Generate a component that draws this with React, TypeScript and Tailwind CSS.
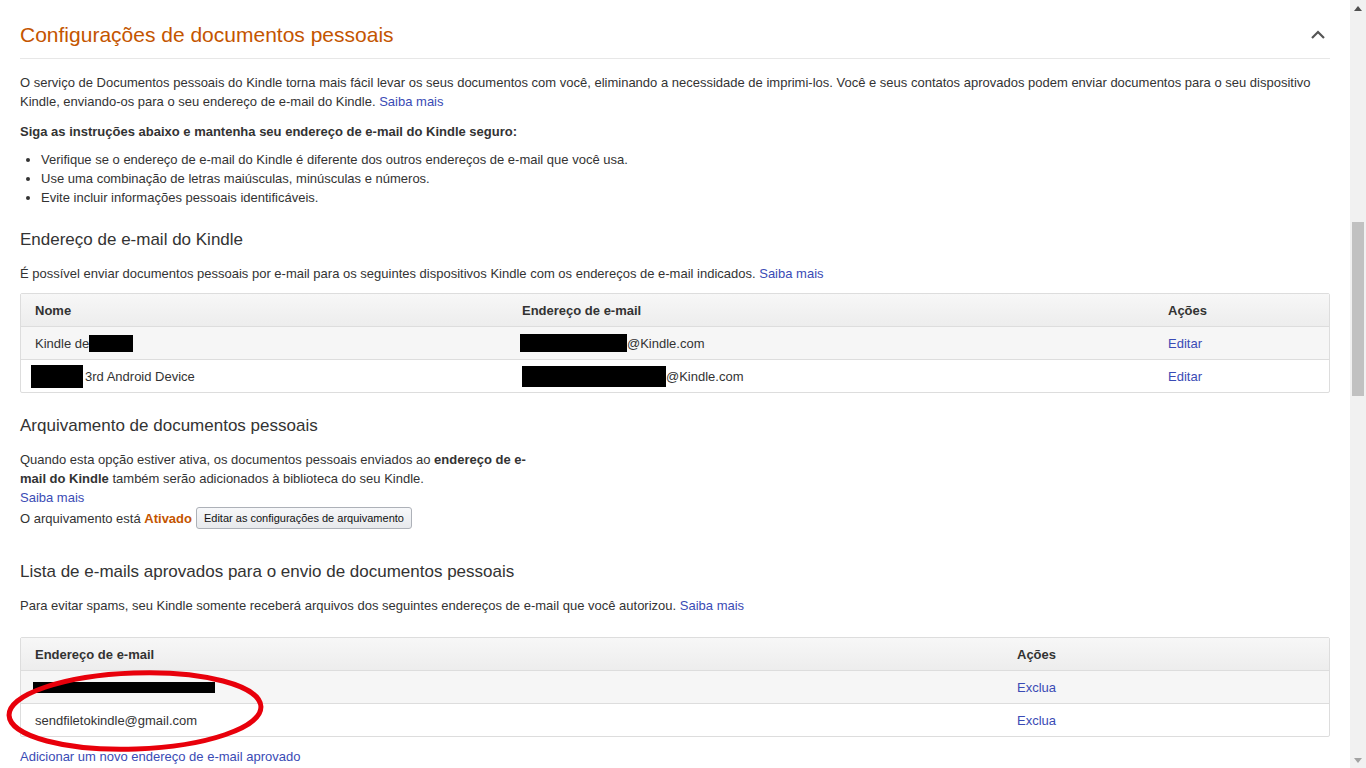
import React from "react";

const font = { fontFamily: '"Liberation Sans", Arial, sans-serif' };

function Link({ children }: { children: React.ReactNode }) {
  return <a className="text-[#3a4bb5] cursor-pointer">{children}</a>;
}

function Redacted({ w, h = 17, className = "" }: { w: number; h?: number; className?: string }) {
  return (
    <span
      className={`inline-block bg-black align-middle ${className}`}
      style={{ width: w, height: h }}
    />
  );
}

function Scrollbar() {
  return (
    <div className="w-[16px] h-full bg-[#f1f1f1] flex flex-col items-center shrink-0">
      <div className="h-[16px] flex items-center justify-center">
        <svg width="8" height="5" viewBox="0 0 8 5">
          <path d="M0 5 L4 0 L8 5 Z" fill="#505050" />
        </svg>
      </div>
      <div className="h-[206px]" />
      <div className="w-[12px] h-[174px] bg-[#c1c1c1]" />
      <div className="flex-1" />
      <div className="h-[16px] flex items-center justify-center">
        <svg width="8" height="5" viewBox="0 0 8 5">
          <path d="M0 0 L4 5 L8 0 Z" fill="#a3a3a3" />
        </svg>
      </div>
    </div>
  );
}

export default function App() {
  return (
    <div className="h-screen w-full flex overflow-hidden bg-white text-[13px] leading-[19px] text-[#333]" style={font}>
      <div className="flex-1 relative px-[20px]">
        {/* header */}
        <div className="pt-[21px] pb-[9px] border-b border-[#e7e7e7] flex items-center justify-between">
          <h1 className="text-[21px] leading-[28px] text-[#c45500]">Configurações de documentos pessoais</h1>
          <svg width="16" height="10" viewBox="0 0 16 10" className="mr-[4px]">
            <polyline points="2,8 8,2 14,8" fill="none" stroke="#555" strokeWidth="2.2" />
          </svg>
        </div>

        <p className="mt-[14px]">
          O serviço de Documentos pessoais do Kindle torna mais fácil levar os seus documentos com você, eliminando a necessidade de imprimi-los. Você e seus contatos aprovados podem enviar documentos para o seu dispositivo Kindle, enviando-os para o seu endereço de e-mail do Kindle. <Link>Saiba mais</Link>
        </p>

        <p className="mt-[11px] font-bold">Siga as instruções abaixo e mantenha seu endereço de e-mail do Kindle seguro:</p>

        <ul className="mt-[9px] pl-[21px] list-disc">
          <li>Verifique se o endereço de e-mail do Kindle é diferente dos outros endereços de e-mail que você usa.</li>
          <li>Use uma combinação de letras maiúsculas, minúsculas e números.</li>
          <li>Evite incluir informações pessoais identificáveis.</li>
        </ul>

        <h2 className="mt-[21px] text-[17px] leading-[24px]">Endereço de e-mail do Kindle</h2>
        <p className="mt-[12px]">
          É possível enviar documentos pessoais por e-mail para os seguintes dispositivos Kindle com os endereços de e-mail indicados. <Link>Saiba mais</Link>
        </p>

        <div className="mt-[10px] border border-[#ddd] rounded-[2px]">
          <div className="grid grid-cols-[486px_646px_1fr] h-[32px] items-center font-bold bg-gradient-to-b from-[#f7f7f7] to-[#ededed]">
            <div className="pl-[14px]">Nome</div>
            <div className="pl-[15px]">Endereço de e-mail</div>
            <div className="pl-[15px]">Ações</div>
          </div>
          <div className="grid grid-cols-[486px_646px_1fr] h-[33px] items-center border-t border-[#ddd] bg-[#f6f6f6]">
            <div className="pl-[14px] flex items-center">Kindle de<Redacted w={44} /></div>
            <div className="pl-[13px] flex items-center"><Redacted w={107} h={18} />@Kindle.com</div>
            <div className="pl-[15px]"><Link>Editar</Link></div>
          </div>
          <div className="grid grid-cols-[486px_646px_1fr] h-[33px] items-center border-t border-[#ddd]">
            <div className="pl-[10px] flex items-center"><Redacted w={52} h={23} className="mr-[2px]" />3rd Android Device</div>
            <div className="pl-[15px] flex items-center"><Redacted w={144} h={21} />@Kindle.com</div>
            <div className="pl-[15px]"><Link>Editar</Link></div>
          </div>
        </div>

        <h2 className="mt-[21px] text-[17px] leading-[24px]">Arquivamento de documentos pessoais</h2>
        <div className="mt-[12px] w-[520px]">
          <p>
            Quando esta opção estiver ativa, os documentos pessoais enviados ao <b>endereço de e-mail do Kindle</b> também serão adicionados à biblioteca do seu Kindle.
          </p>
          <p><Link>Saiba mais</Link></p>
          <p className="flex items-center">
            O arquivamento está&nbsp;<b className="text-[#c45500]">Ativado</b>
            <button className="ml-[4px] h-[22px] px-[7px] text-[11px] leading-[20px] text-[#111] border border-[#adb1b8] rounded-[3px] bg-gradient-to-b from-[#f7f8fa] to-[#e7e9ec]">
              Editar as configurações de arquivamento
            </button>
          </p>
        </div>

        <h2 className="mt-[31px] text-[17px] leading-[24px]">Lista de e-mails aprovados para o envio de documentos pessoais</h2>
        <p className="mt-[12px]">
          Para evitar spams, seu Kindle somente receberá arquivos dos seguintes endereços de e-mail que você autorizou. <Link>Saiba mais</Link>
        </p>

        <div className="mt-[22px] border border-[#ddd] rounded-[2px]">
          <div className="grid grid-cols-[981px_1fr] h-[32px] items-center font-bold bg-gradient-to-b from-[#f7f7f7] to-[#ededed]">
            <div className="pl-[14px]">Endereço de e-mail</div>
            <div className="pl-[15px]">Ações</div>
          </div>
          <div className="grid grid-cols-[981px_1fr] h-[33px] items-center border-t border-[#ddd] bg-[#f6f6f6]">
            <div className="pl-[12px] flex items-center"><Redacted w={182} h={11} /></div>
            <div className="pl-[15px]"><Link>Exclua</Link></div>
          </div>
          <div className="grid grid-cols-[981px_1fr] h-[33px] items-center border-t border-[#ddd]">
            <div className="pl-[14px]">sendfiletokindle@gmail.com</div>
            <div className="pl-[15px]"><Link>Exclua</Link></div>
          </div>
        </div>

        <p className="mt-[10px]"><Link>Adicionar um novo endereço de e-mail aprovado</Link></p>

        {/* annotation */}
        <svg className="absolute left-[4px] top-[668px] pointer-events-none" width="264" height="86" viewBox="0 0 264 86">
          <ellipse cx="131" cy="43" rx="126" ry="38" fill="none" stroke="#e8000b" strokeWidth="5" transform="rotate(-2 131 43)" />
        </svg>
      </div>
      <Scrollbar />
    </div>
  );
}
